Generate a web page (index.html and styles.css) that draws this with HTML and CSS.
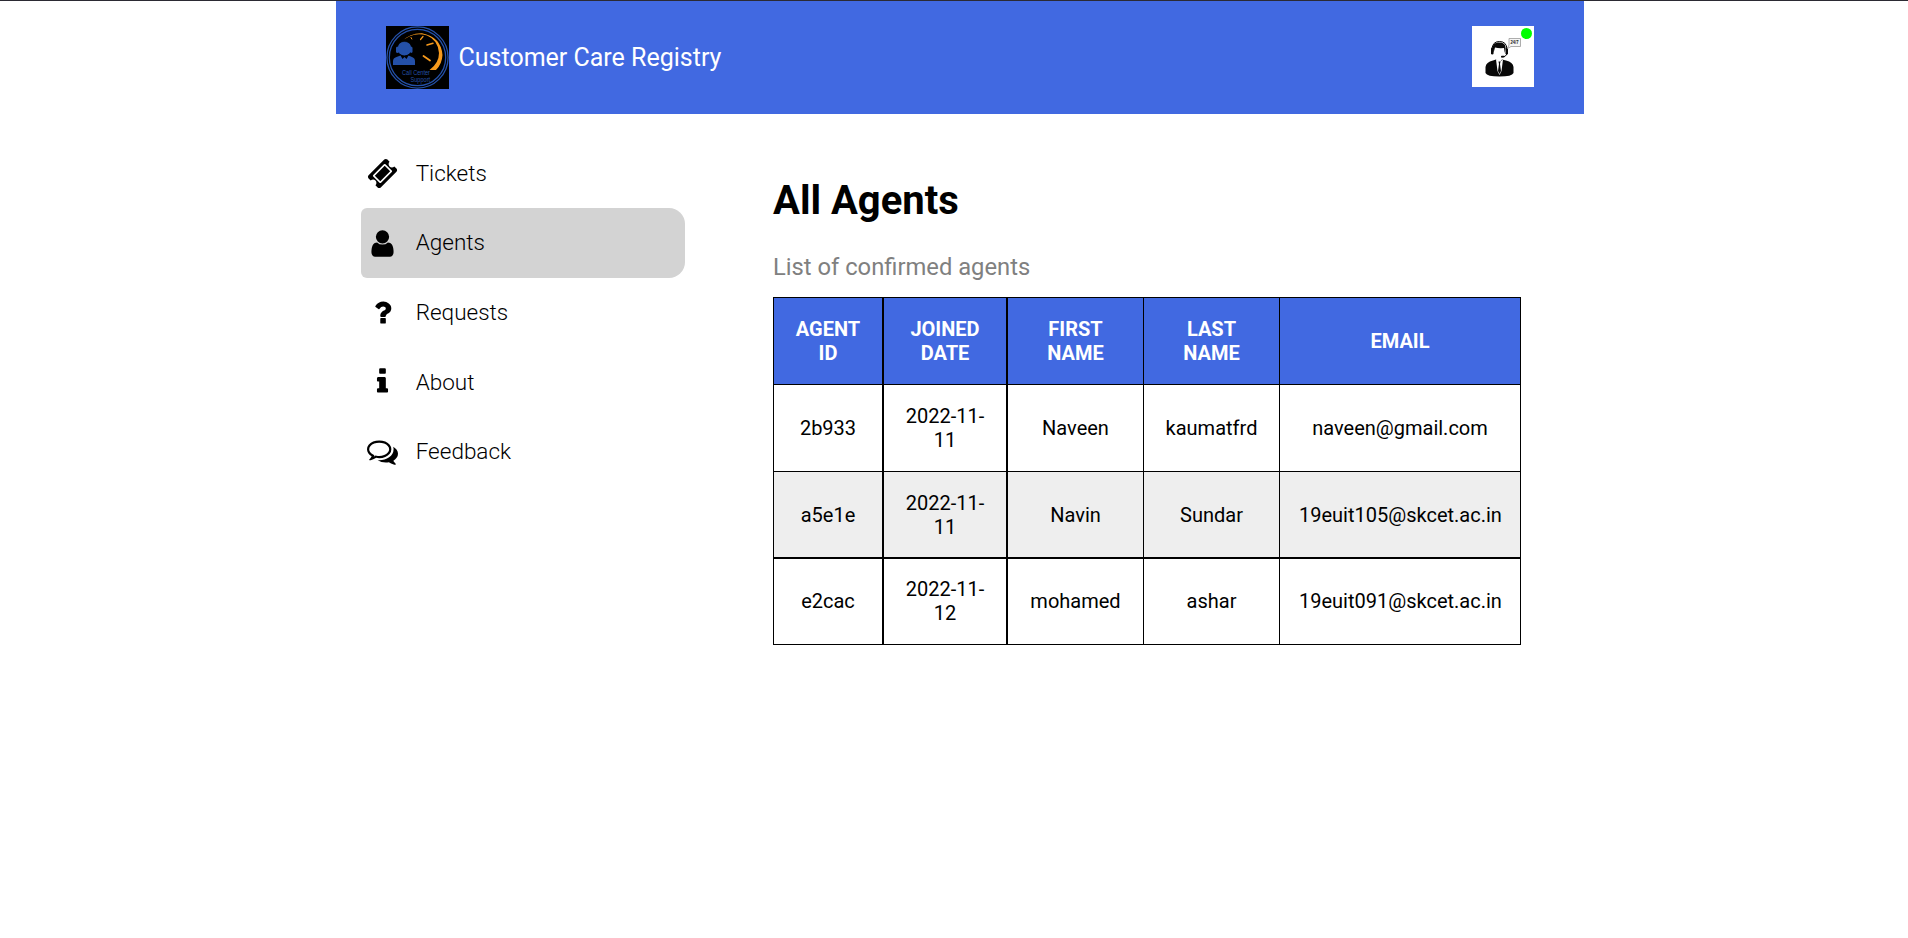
FILE: index.html
```html
<!DOCTYPE html>
<html lang="en">
<head>
<meta charset="utf-8">
<title>Customer Care Registry</title>
<link rel="stylesheet" href="styles.css">
</head>
<body>
<div class="page">
  <header class="header">
    <div class="brand">
      <svg class="logo" viewBox="0 0 63 63">
        <rect width="63" height="63" fill="#000"/>
        <g fill="none" stroke="#2450a8">
          <circle cx="31.5" cy="31.5" r="30.6" stroke-width="1.3"/>
          <circle cx="31.5" cy="31.5" r="28.2" stroke-width="1.3"/>
        </g>
        <path d="M15 16Q24 7 36 7.300Q55 11 56.500 29Q56 38 50 44H43.500Q53 37 53 27Q52 14 41 9.500Q27 5 15 16Z" fill="#f79a1c"/>
        <g stroke="#f79a1c" stroke-linecap="round">
          <path d="M25 11.500l.8 1.500" stroke-width="1"/>
          <path d="M37 10.500l-2.500 3" stroke-width="1.200"/>
          <path d="M47 17.300l-6 1.700" stroke-width="1.500"/>
          <path d="M37.500 30l6.500 4.500" stroke-width="1.800"/>
        </g>
        <g fill="#2450a8">
          <circle cx="18.500" cy="22.500" r="7"/>
          <rect x="10" y="20.500" width="3" height="6.500" rx="1.500"/>
          <rect x="23.500" y="20.500" width="3" height="6.500" rx="1.500"/>
          <path d="M7 39V35Q7 32 10.500 31L14.500 29.500L16.500 33L18.500 31L20.500 33L22.500 29.500L26 31Q29 32 29 35V39Z"/>
        </g>
        <path d="M11.500 21Q12.500 15.500 18 15.500Q24.500 15.500 25.500 21M25 26Q24 30 19 30" fill="none" stroke="#000" stroke-width=".5"/>
        <g class="logo-text">
          <text transform="translate(16 48.500) scale(.7 1)">Call Center</text>
          <text transform="translate(24.500 56) scale(.7 1)">Support</text>
        </g>
      </svg>
      <span class="brand-name">Customer Care Registry</span>
    </div>
    <div class="avatar">
      <svg class="avatar-picture" viewBox="0 0 62 61">
        <rect width="62" height="61" fill="#fff"/>
        <path d="M13.500 47V41Q14 36 21 34.500L24 33.500L27 37L30 33.500L34 34.500Q41 36 41.500 41V47Q40 50.500 27.500 50.500Q15 50.500 13.500 47Z" fill="#080808"/>
        <path d="M22.500 21Q22 31 27.500 32.500Q33 31 33 21Z" fill="#fff"/>
        <path d="M24 33.500L27.500 36L31 33.500L29.500 45L27.500 49L25.500 45Z" fill="#fff"/>
        <path d="M26.500 35.500h2l-.5 2.500 1 7-1.500 3-1.500-3 1-7Z" fill="#080808"/>
        <path d="M21.500 27L20.800 21Q21 16.500 27 16.500Q34 16.500 33.500 22L32.800 27L32 22Q27 22.500 23 21.500Z" fill="#080808"/>
        <path d="M20 23Q20.500 15.500 27.500 15.500Q34.500 15.500 35 23M35 28Q34 31 29.500 31" fill="none" stroke="#080808" stroke-width="1"/>
        <rect x="19" y="21.500" width="2.500" height="7" rx="1.200" fill="#080808"/>
        <rect x="33.500" y="21.500" width="2.500" height="7" rx="1.200" fill="#080808"/>
        <rect x="29" y="29.800" width="3.500" height="1.700" rx=".8" fill="#080808"/>
        <path d="M37 12.500H48.500V20.500H39L35.500 22.500L37 19Z" fill="#f6f6f6" stroke="#999" stroke-width=".8"/>
        <text class="bubble-text" x="38.500" y="18.300" textLength="8" lengthAdjust="spacingAndGlyphs">24/7</text>
      </svg>
      <span class="status"></span>
    </div>
  </header>
  <div class="body">
    <nav class="sidebar">
      <a class="item"><svg class="icon" viewBox="0 0 1792 1792"><path d="M1024 452l316 316-572 572-316-316 572-572zm-211 979l618-618q19-19 19-45t-19-45l-362-362q-18-18-45-18t-45 18l-618 618q-19 19-19 45t19 45l362 362q18 18 45 18t45-18zm889-637l-907 908q-37 37-90.500 37t-90.500-37l-126-125q56-56 56-136t-56-136-136-56-136 56l-125-126q-37-37-37-90.500t37-90.500l907-906q37-37 90.500-37t90.500 37l125 125q-56 56-56 136t56 136 136 56 136-56l126 125q37 37 37 90.500t-37 90.500z"/></svg><span class="label">Tickets</span></a>
      <a class="item item-active"><svg class="icon" viewBox="0 0 1792 1792"><path d="M1536 1399q0 109-62.500 187t-150.500 78h-854q-88 0-150.500-78t-62.500-187q0-85 8.500-160.500t31.500-152 58.500-131 94-89 134.500-34.500q131 128 313 128t313-128q76 0 134.500 34.500t94 89 58.500 131 31.500 152 8.500 160.500zm-256-887q0 159-112.500 271.500t-271.500 112.500-271.500-112.500-112.500-271.500 112.500-271.500 271.500-112.500 271.500 112.500 112.500 271.500z"/></svg><span class="label">Agents</span></a>
      <a class="item"><svg class="icon" viewBox="0 0 1792 1792"><path d="M1088 1256v240q0 16-12 28t-28 12h-240q-16 0-28-12t-12-28v-240q0-16 12-28t28-12h240q16 0 28 12t12 28zm316-600q0 54-15.500 101t-35 76.500-55 59.500-57.500 43.500-61 35.500q-41 23-68.500 65t-27.500 67q0 17-12 32.500t-28 15.500h-240q-15 0-25.500-18.500t-10.500-37.500v-45q0-83 65-156.500t143-108.500q59-27 84-56t25-76q0-42-46.500-74t-107.500-32q-65 0-108 29-35 25-107 115-13 16-31 16-12 0-25-8l-164-125q-13-10-15.500-25t5.500-28q160-266 464-266 80 0 161 31t146 83 106 127.500 41 158.500z"/></svg><span class="label">Requests</span></a>
      <a class="item"><svg class="icon" viewBox="0 0 1792 1792"><path d="M1216 1344v128q0 26-19 45t-45 19h-512q-26 0-45-19t-19-45v-128q0-26 19-45t45-19h64v-384h-64q-26 0-45-19t-19-45v-128q0-26 19-45t45-19h384q26 0 45 19t19 45v576h64q26 0 45 19t19 45zm-128-1152v192q0 26-19 45t-45 19h-256q-26 0-45-19t-19-45v-192q0-26 19-45t45-19h256q26 0 45 19t19 45z"/></svg><span class="label">About</span></a>
      <a class="item"><svg class="icon" viewBox="0 0 1792 1792"><path d="M704 384q-153 0-286 52t-211.500 141-78.500 191q0 82 53 158t149 132l97 56-35 84q34-20 62-39l44-31 53 10q78 14 153 14 153 0 286-52t211.500-141 78.500-191-78.500-191-211.500-141-286-52zm0-128q191 0 353.500 68.500t256.500 186.500 94 257-94 257-256.500 186.500-353.500 68.500q-86 0-176-16-124 88-278 128-36 9-86 16h-3q-11 0-20.500-8t-11.500-21q-1-3-1-6.500t.5-6.500 2-6l2.500-5 3.500-5.500 4-5 4.500-5 4-4.500q5-6 23-25t26-29.500 22.500-29 25-38.500 20.500-44q-124-72-195-177t-71-224q0-139 94-257t256.500-186.500 353.500-68.500zm822 1169q10 24 20.500 44t25 38.500 22.500 29 26 29.500 23 25q1 1 4 4.500t4.500 5 4 5 3.500 5.500l2.500 5 2 6 .5 6.500-1 6.500q-3 14-13 22t-22 7q-50-7-86-16-154-40-278-128-90 16-176 16-271 0-472-132 58 4 88 4 161 0 309-45t264-129q125-92 192-212t67-254q0-77-23-152 129 71 204 178t75 230q0 120-71 224.500t-195 176.500z"/></svg><span class="label">Feedback</span></a>
    </nav>
    <main class="content">
      <h1 class="title">All Agents</h1>
      <p class="subtitle">List of confirmed agents</p>
      <table class="agents">
        <colgroup><col class="col-id"><col class="col-date"><col class="col-name"><col class="col-name"><col class="col-email"></colgroup>
        <thead>
          <tr><th>AGENT ID</th><th>JOINED DATE</th><th>FIRST NAME</th><th>LAST NAME</th><th>EMAIL</th></tr>
        </thead>
        <tbody>
          <tr><td>2b933</td><td>2022-11-11</td><td>Naveen</td><td>kaumatfrd</td><td>naveen@gmail.com</td></tr>
          <tr><td>a5e1e</td><td>2022-11-11</td><td>Navin</td><td>Sundar</td><td>19euit105@skcet.ac.in</td></tr>
          <tr><td>e2cac</td><td>2022-11-12</td><td>mohamed</td><td>ashar</td><td>19euit091@skcet.ac.in</td></tr>
        </tbody>
      </table>
    </main>
  </div>
</div>
</body>
</html>
```
FILE: styles.css
```css
* { box-sizing: border-box; }

body {
  margin: 0;
  min-height: 938px;
  border-top: 1px solid #2b2a33;
  background: #fff;
  color: #000;
  font-family: Roboto, "Liberation Sans", sans-serif;
}

.page { width: 1248px; margin-left: 336px; }

.header {
  display: flex;
  justify-content: space-between;
  align-items: flex-start;
  height: 113px;
  padding: 25px 50px;
  background: royalblue;
}

.brand { display: flex; align-items: center; gap: 9.500px; }
.logo { display: block; width: 63px; height: 63px; }
.logo-text { fill: #2450a8; font: 8px "Liberation Sans", sans-serif; }
.brand-name { padding-top: 1px; color: #fff; font-size: 25px; line-height: 30px; }

.avatar { position: relative; width: 62px; height: 61px; }
.avatar-picture { display: block; width: 62px; height: 61px; }
.bubble-text { fill: #222; font: bold 5px "Liberation Sans", sans-serif; }
.status {
  position: absolute;
  top: 2px;
  right: 2px;
  width: 11px;
  height: 11px;
  border-radius: 50%;
  background: #0f0;
}

.body { display: flex; }

.sidebar { width: 324px; margin: 25px 0 0 25px; }
.item {
  display: flex;
  align-items: center;
  gap: 18.200px;
  height: 69.300px;
  padding-left: 5.500px;
  font-size: 22.500px;
  font-weight: 300;
}
.item:first-child { height: 69px; }
.item-active { height: 70px; background: lightgray; border-radius: 6px 16px 16px 6px; }
.icon { width: 31px; height: 31px; fill: #000; }
.label { line-height: 26px; padding-bottom: .6px; }
.item-active .label { padding-bottom: 2px; }

.content { width: 748px; margin-left: 88px; }
.title { margin: 63px 0 0; font-size: 40px; line-height: 48px; font-weight: 700; }
.subtitle { margin: 27px 0 0; font-size: 23.750px; line-height: 30px; color: gray; }

.agents {
  width: 748px;
  margin-top: 15px;
  table-layout: fixed;
  border-spacing: 0;
  border: solid #000;
  border-width: 1px 0 0 1px;
  font-size: 20px;
  line-height: 24px;
  text-align: center;
}
.col-id { width: 110px; }
.col-date { width: 124px; }
.col-name { width: 136px; }
.col-email { width: 241px; }
.agents th, .agents td {
  height: 87px;
  padding: 0 20px;
  border: solid #000;
  border-width: 0 1px 1px 0;
}
.agents th { background: royalblue; color: #fff; font-weight: 700; }
.agents th:nth-child(-n+2), .agents td:nth-child(-n+2) { border-right-width: 2px; }
.agents td:last-child { padding: 0 19px; }
.agents tbody tr:nth-child(2) td { background: #eee; border-bottom-width: 2px; }
.agents tbody tr:last-child td { height: 86px; padding-bottom: 1px; }
```
